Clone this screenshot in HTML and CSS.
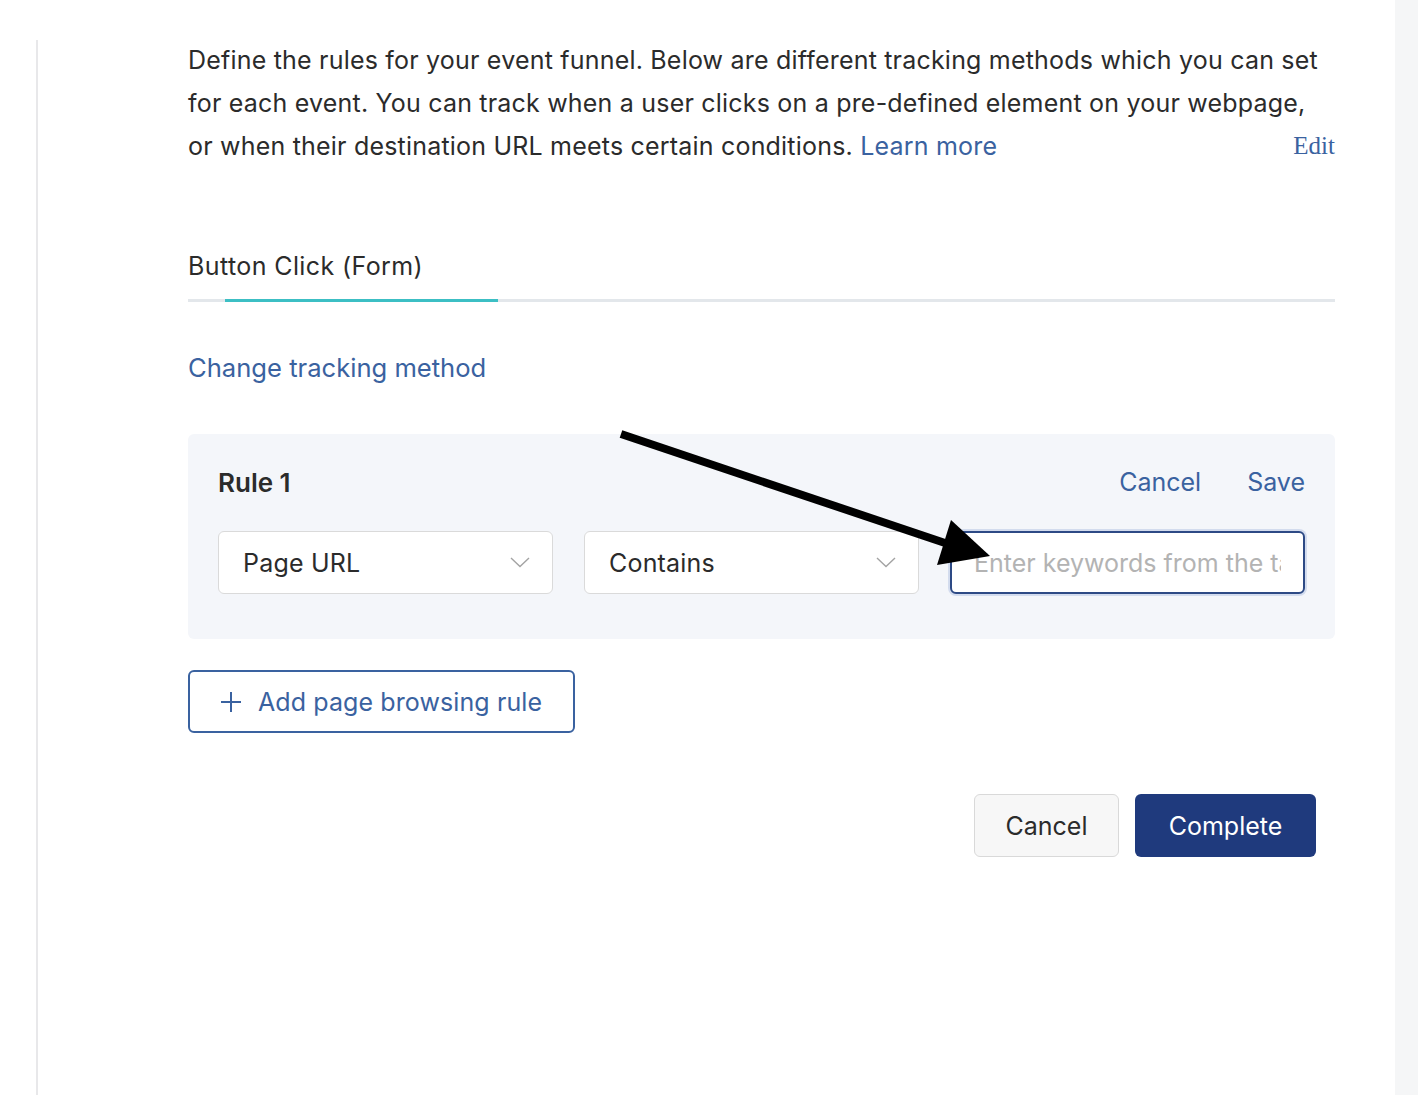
FILE: index.html
```html
<!DOCTYPE html>
<html lang="en">
<head>
    <meta charset="UTF-8">
    <meta name="viewport" content="width=device-width, initial-scale=1.0">
    <title>Event funnel rules</title>
    <link rel="stylesheet" href="styles.css">
</head>
<body>
    <div class="page">
        <div class="gutter"></div>

        <main class="main">
            <div class="content">
                <p class="intro-text">Define the rules for your event funnel. Below are different tracking methods which you can set for each event. You can track when a user clicks on a pre-defined element on your webpage, or when their destination URL meets certain conditions. <a href="#" class="link">Learn more</a><a href="#" class="edit">Edit</a></p>

                <div class="tab">
                    <div class="tab-title">Button Click (Form)</div>
                    <div class="tab-track"><div class="tab-ink"></div></div>
                </div>

                <a href="#" class="change-link">Change tracking method</a>

                <div class="rule-box">
                    <div class="rule-head">
                        <span class="rule-name">Rule 1</span>
                        <div class="rule-actions">
                            <a href="#" class="link">Cancel</a>
                            <a href="#" class="link">Save</a>
                        </div>
                    </div>
                    <div class="rule-fields">
                        <div class="select">
                            <span>Page URL</span>
                            <svg class="chevron" width="20" height="11" viewBox="0 0 20 11"><path d="M1 1l9 8.5L19 1" fill="none" stroke="#a3a3a3" stroke-width="1.4"/></svg>
                        </div>
                        <div class="select">
                            <span>Contains</span>
                            <svg class="chevron" width="20" height="11" viewBox="0 0 20 11"><path d="M1 1l9 8.5L19 1" fill="none" stroke="#a3a3a3" stroke-width="1.4"/></svg>
                        </div>
                        <input class="keyword" type="text" placeholder="Enter keywords from the target URL">
                    </div>
                </div>

                <button class="add-rule">
                    <svg width="22" height="22" viewBox="0 0 22 22"><path d="M11 1v20M1 11h20" stroke="#3a62a0" stroke-width="2"/></svg>
                    <span>Add page browsing rule</span>
                </button>

                <div class="footer">
                    <button class="btn btn-cancel">Cancel</button>
                    <button class="btn btn-complete">Complete</button>
                </div>
            </div>
        </main>

        <div class="side-panel"></div>
    </div>

    <!-- annotation arrow drawn over the screenshot -->
    <svg class="arrow" width="1418" height="1095" viewBox="0 0 1418 1095">
        <line x1="621" y1="434" x2="948" y2="544" stroke="#000" stroke-width="8"/>
        <polygon points="951,520 937,565 990,556" fill="#000"/>
    </svg>
</body>
</html>
```

FILE: styles.css
```css
body {
    margin: 0;
    font-family: Inter, "Noto Sans", sans-serif;
    color: #2b2b2b;
    background-color: white;
}

.page {
    display: flex;
    min-height: 1095px;
}

.gutter {
    width: 36px;
}

.main {
    flex: 1;
    margin-top: 40px;
    border-left: 2px solid #e8e8ea;
}

.content {
    width: 1147px;
    margin-left: 150px;
    margin-top: -1px;
}

.side-panel {
    width: 23px;
    background-color: #f5f6f7;
}

a {
    text-decoration: none;
}

.link {
    color: #3a62a0;
}

.intro-text {
    margin: 0;
    font-size: 25px;
    letter-spacing: 0.2px;
    line-height: 43px;
}

.edit {
    float: right;
    font-family: "Liberation Serif", serif;
    font-size: 25px;
    line-height: 41px;
    letter-spacing: 0;
    color: #3a62a0;
}

.tab {
    margin-top: 83px;
}

.tab-title {
    font-size: 25px;
    letter-spacing: 0.4px;
    line-height: 30px;
    padding-bottom: 18px;
}

.tab-track {
    height: 3px;
    background-color: #e3e7eb;
}

.tab-ink {
    width: 273px;
    height: 3px;
    margin-left: 37px;
    background-color: #3cbfc4;
}

.change-link {
    display: block;
    margin-top: 51px;
    font-size: 25.6px;
    line-height: 30px;
    color: #3a62a0;
}

.rule-box {
    margin-top: 51px;
    padding: 33px 30px 45px;
    background-color: #f4f6fa;
    border-radius: 6px;
}

.rule-head {
    display: flex;
    justify-content: space-between;
    align-items: center;
    height: 30px;
    font-size: 25px;
}

.rule-name {
    font-size: 26px;
    font-weight: 600;
}

.rule-actions {
    display: flex;
    gap: 46px;
}

.rule-fields {
    display: grid;
    grid-template-columns: 335px 335px minmax(0, 1fr);
    gap: 31px;
    margin-top: 34px;
}

.select {
    display: flex;
    align-items: center;
    justify-content: space-between;
    box-sizing: border-box;
    height: 63px;
    padding: 0 22px 0 24px;
    background-color: white;
    border: 1.5px solid #dadada;
    border-radius: 6px;
    font-size: 25px;
    letter-spacing: 0.2px;
}

.keyword {
    box-sizing: border-box;
    width: 100%;
    min-width: 0;
    height: 63px;
    padding: 0 22px;
    border: 2px solid #2d4a85;
    border-radius: 6px;
    box-shadow: 0 0 0 2px #d3dcee;
    font-family: Inter, "Noto Sans", sans-serif;
    font-size: 25px;
    color: #2b2b2b;
    outline: none;
}

.keyword::placeholder {
    color: #b3b3b3;
}

.add-rule {
    display: flex;
    align-items: center;
    gap: 16px;
    box-sizing: border-box;
    width: 387px;
    height: 63px;
    margin-top: 31px;
    padding: 0 30px;
    background-color: white;
    border: 2px solid #3a62a0;
    border-radius: 6px;
    font-family: Inter, "Noto Sans", sans-serif;
    font-size: 25px;
    letter-spacing: 0.1px;
    color: #3a62a0;
    cursor: pointer;
}

.footer {
    display: flex;
    justify-content: flex-end;
    gap: 16px;
    margin-top: 61px;
    margin-right: 19px;
}

.btn {
    box-sizing: border-box;
    height: 63px;
    border-radius: 6px;
    font-family: Inter, "Noto Sans", sans-serif;
    font-size: 25px;
    cursor: pointer;
}

.btn-cancel {
    width: 145px;
    background-color: #f7f7f7;
    border: 1.5px solid #d9d9d9;
    color: #2b2b2b;
}

.btn-complete {
    width: 181px;
    background-color: #1f3a7d;
    border: none;
    color: white;
}

.arrow {
    position: absolute;
    top: 0;
    left: 0;
    pointer-events: none;
}
```
